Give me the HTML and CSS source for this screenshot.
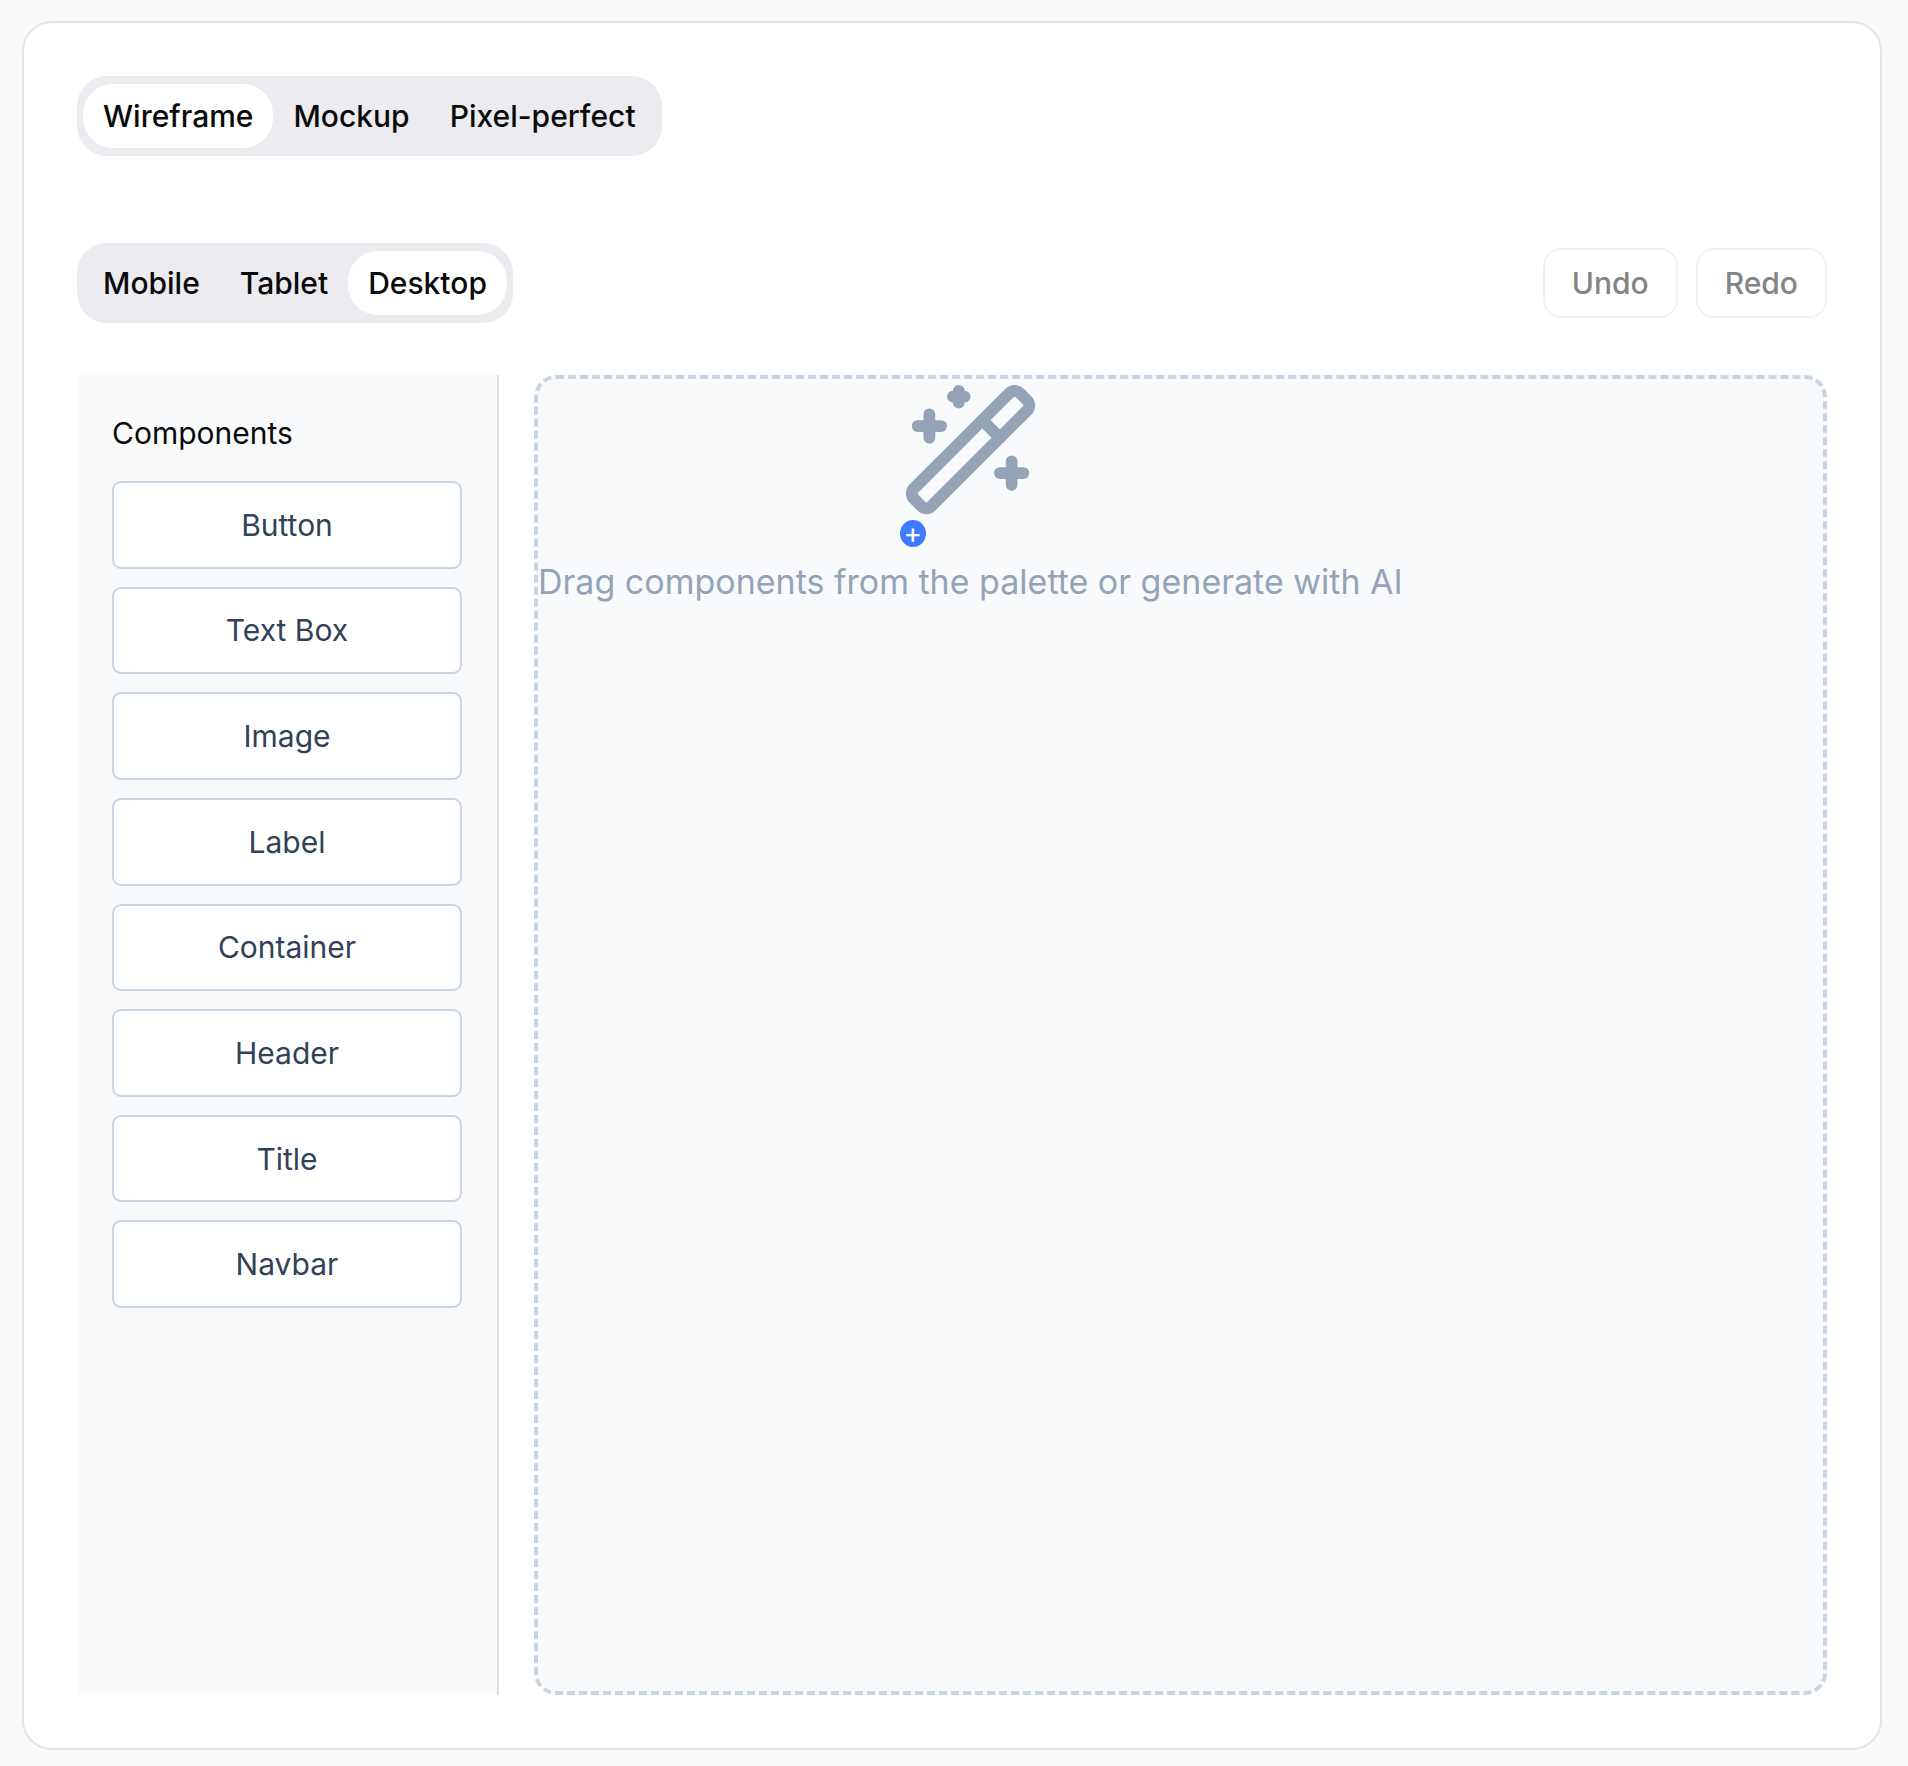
FILE: index.html
```html
<!DOCTYPE html>
<html lang="en">
<head>
  <meta charset="utf-8">
  <meta name="viewport" content="width=device-width, initial-scale=1">
  <title>Wireframe editor</title>
  <link rel="stylesheet" href="styles.css">
</head>
<body>
  <main class="card">
    <div class="tabs" role="tablist" aria-label="Fidelity">
      <button class="tab tab-active" type="button" role="tab" aria-selected="true">Wireframe</button>
      <button class="tab" type="button" role="tab" aria-selected="false">Mockup</button>
      <button class="tab" type="button" role="tab" aria-selected="false">Pixel-perfect</button>
    </div>

    <div class="toolbar">
      <div class="tabs" role="tablist" aria-label="Device">
        <button class="tab" type="button" role="tab" aria-selected="false">Mobile</button>
        <button class="tab" type="button" role="tab" aria-selected="false">Tablet</button>
        <button class="tab tab-active" type="button" role="tab" aria-selected="true">Desktop</button>
      </div>
      <div class="history">
        <button class="history-button" type="button" disabled>Undo</button>
        <button class="history-button" type="button" disabled>Redo</button>
      </div>
    </div>

    <div class="workspace">
      <aside class="palette">
        <h2 class="palette-title">Components</h2>
        <div class="palette-list">
          <button class="palette-item" type="button">Button</button>
          <button class="palette-item" type="button">Text Box</button>
          <button class="palette-item" type="button">Image</button>
          <button class="palette-item" type="button">Label</button>
          <button class="palette-item" type="button">Container</button>
          <button class="palette-item" type="button">Header</button>
          <button class="palette-item" type="button">Title</button>
          <button class="palette-item" type="button">Navbar</button>
        </div>
      </aside>

      <section class="canvas" aria-label="Canvas">
        <div class="empty">
          <div class="empty-art">
            <svg class="wand" viewBox="0 0 24 24" fill="none" stroke="currentColor" stroke-width="2" stroke-linecap="round" stroke-linejoin="round" aria-hidden="true">
              <path d="m21.64 3.64-1.28-1.28a1.21 1.21 0 0 0-1.72 0L2.36 18.64a1.21 1.21 0 0 0 0 1.72l1.28 1.28a1.2 1.2 0 0 0 1.72 0L21.64 5.36a1.2 1.2 0 0 0 0-1.72"/>
              <path d="m14 7 3 3"/>
              <path d="M5 6v4"/>
              <path d="M19 14v4"/>
              <path d="M10 2v2"/>
              <path d="M7 8H3"/>
              <path d="M21 16h-4"/>
              <path d="M11 3H9"/>
            </svg>
            <span class="plus">+</span>
          </div>
          <p class="empty-text">Drag components from the palette or generate with AI</p>
        </div>
      </section>
    </div>
  </main>
</body>
</html>
```

FILE: styles.css
```css
* {
  box-sizing: border-box;
}

body {
  margin: 0;
  padding: 21px 26px 16px 22px;
  background: #f8fafc;
  color: #0a0a0a;
  font-family: Inter, "Liberation Sans", sans-serif;
  font-size: 30px;
  line-height: 44px;
}

button {
  margin: 0;
  font: inherit;
  color: inherit;
  cursor: pointer;
}

.card {
  padding: 53px;
  border: 2px solid #e5e5e5;
  border-radius: 30px;
  background: #fff;
}

.tabs {
  display: inline-flex;
  padding: 8px 6px;
  border-radius: 30px;
  background: #ececf0;
  vertical-align: top;
}

.tab {
  padding: 10px 20px;
  border: 0;
  border-radius: 30px;
  background: transparent;
  font-weight: 500;
}

.tab-active {
  background: #fff;
}

.toolbar {
  display: flex;
  flex-wrap: wrap;
  align-items: center;
  justify-content: space-between;
  gap: 18px;
  margin: 87px 0 52px;
}

.history {
  display: flex;
  gap: 18px;
}

.history-button {
  padding: 11px 27px;
  border: 2px solid #f2f2f2;
  border-radius: 18px;
  background: #fff;
  color: #848484;
  font-weight: 500;
  cursor: default;
}

.workspace {
  display: flex;
  gap: 35px;
  min-height: 1320px;
}

.palette {
  flex: 0 0 422px;
  padding: 36px 35px;
  border-right: 2px solid #dfdfdf;
  background: #f8fafc;
}

.palette-title {
  margin: 0 0 26px;
  font-size: 30px;
  font-weight: 400;
}

.palette-list {
  display: grid;
  grid-auto-rows: 1fr;
  gap: 18px;
  min-height: 827px;
}

.palette-item {
  padding: 0 18px;
  border: 2px solid #cad5e2;
  border-radius: 9px;
  background: #fff;
  color: #314158;
}

.canvas {
  flex: 1;
  min-width: 0;
  border: 4px dashed #cad5e2;
  border-radius: 22px;
  background: #f8fafc;
}

.empty {
  display: inline-flex;
  flex-direction: column;
  align-items: center;
  color: #94a3b8;
}

.empty-art {
  display: flex;
  flex-direction: column;
  align-items: flex-start;
}

.wand {
  width: 141px;
  height: 141px;
}

.plus {
  width: 26px;
  height: 27px;
  border-radius: 50%;
  background: #407bff;
  color: #fff;
  font-size: 28px;
  line-height: 27px;
  text-align: center;
}

.empty-text {
  margin: 13px 0 0;
  font-size: 34px;
  line-height: 44px;
}
```
